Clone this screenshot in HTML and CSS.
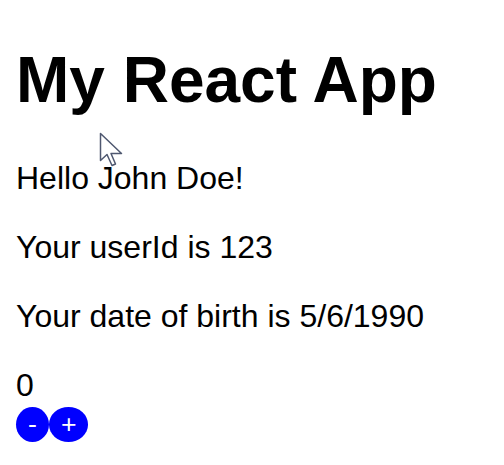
FILE: index.html
```html
<!DOCTYPE html>
<html>
<head>
<meta charset="utf-8">
<link rel="stylesheet" href="styles.css">
</head>
<body>
<div class="app">
  <h1 class="title">My React App</h1>
  <p class="line">Hello John Doe!</p>
  <p class="line">Your userId is 123</p>
  <p class="line">Your date of birth is 5/6/1990</p>
  <div class="counter">
    <div class="count">0</div>
    <div class="buttons"><button class="btn">-</button><button class="btn">+</button></div>
  </div>
</div>
<svg class="cursor" width="26" height="38" viewBox="0 0 26 38">
  <path d="M1.5 1.5 L1.5 28.5 L8 22.5 L13 33.5 L16.5 32 L12 21.5 L22.5 21.5 Z" fill="#fff" stroke="#4f5870" stroke-width="1.5" stroke-linejoin="round"/>
</svg>
</body>
</html>
```
FILE: styles.css
```css
html, body {
  background: #fff;
}
body {
  margin: 0;
  font-family: "Liberation Sans", Arial, sans-serif;
  font-size: 32px;
  color: #000;
}
.app {
  padding: 0 16px;
}
.title {
  font-size: 64px;
  font-weight: bold;
  margin: 42.88px 0;
}
.line {
  margin: 32px 0;
}
.btn {
  font-family: "Liberation Sans", Arial, sans-serif;
  font-size: 26.67px;
  padding: 2px 12px;
  border: none;
  border-radius: 50%;
  background: #0000ff;
  color: #fff;
  margin: 0;
}
.cursor {
  position: absolute;
  left: 98.5px;
  top: 131.5px;
}
```
